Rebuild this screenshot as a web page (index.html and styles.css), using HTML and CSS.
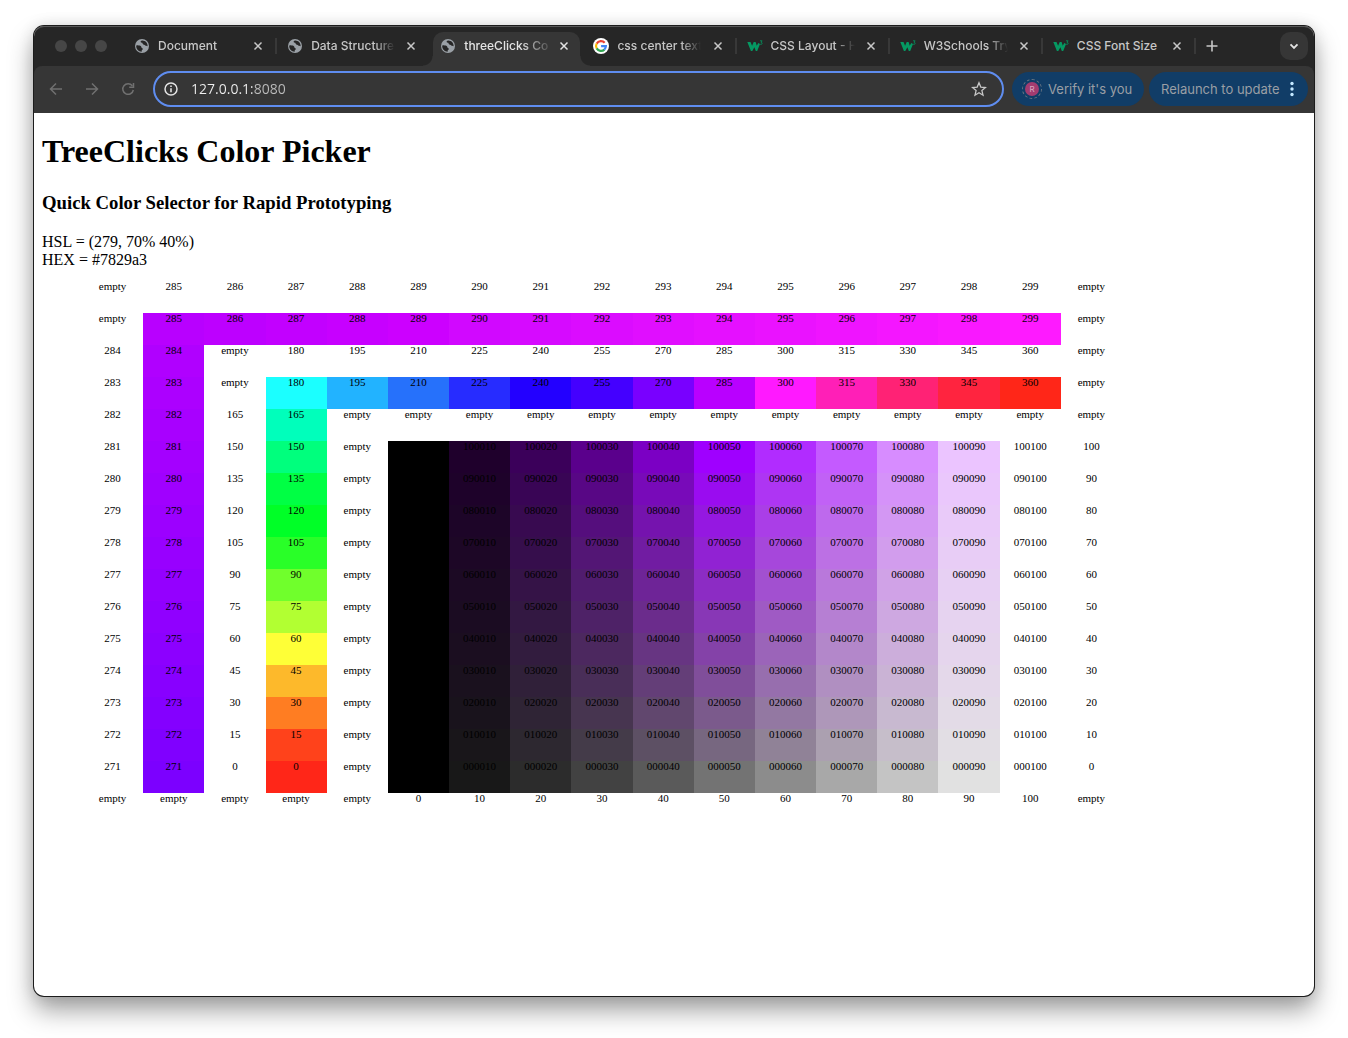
FILE: index.html
```html
<!DOCTYPE html>
<html lang="en">
<head>
<meta charset="utf-8">
<title>threeClicks Color Picker</title>
<link rel="stylesheet" href="styles.css">
</head>
<body>
<svg class="defs" aria-hidden="true">
  <symbol id="globe" viewBox="0 0 16 16">
    <circle cx="8" cy="8" r="7" fill="#9aa0a6"/>
    <path class="land" d="M2.6 7.2C4 7.3 5.600 7.300 6.700 7.900c.9.500.3 1.600 1.200 2 .8.300 1 .6.800 1.300-.2.700-.9.600-1 1.400v1.200C4.800 13.900 2.200 11.400 2.200 8.100ZM8.200 2.400c-1.400.4-1.900 1.200-1.400 1.900.5.600 1.600.2 1.700 1 .1.900.7 1.300 1.500 1.400 1 .1 1.200 1 2.100 1.100.7.100 1.200.2 1.500.5.300-3-1.900-5.800-5.400-5.900Z"/>
  </symbol>
  <symbol id="close" viewBox="0 0 16 16"><path d="M4.500 4.500l7 7M11.500 4.500l-7 7" fill="none" stroke="currentColor" stroke-width="1.500"/></symbol>
  <symbol id="w3" viewBox="0 0 16 16">
    <path d="M.3 4h3.200l1.600 3.800L6.700 4h1.900l1.200 3.800L11.200 5l1.800 1-2.800 7H8.800L7.400 9.300 5.300 13H3.900Z" fill="#059862"/>
    <path d="M13 2.800h2.100l-1 1.500c1.400.1 1.300 2.100 0 2.100-.6 0-.9-.2-1.200-.6" fill="none" stroke="#059862" stroke-width=".8"/>
  </symbol>
</svg>
<div class="window">
  <header>
    <div class="tabstrip">
      <div class="lights"><i></i><i></i><i></i></div>
      <nav class="tabs" aria-label="Tabs">
        <div class="tab"><svg class="icon"><use href="#globe"/></svg><span class="title">Document</span><button aria-label="Close Document"><svg class="icon"><use href="#close"/></svg></button></div>
        <div class="tab plain"><svg class="icon"><use href="#globe"/></svg><span class="title">Data Structure</span><button aria-label="Close Data Structure"><svg class="icon"><use href="#close"/></svg></button></div>
        <div class="tab active"><svg class="icon"><use href="#globe"/></svg><span class="title">threeClicks Co</span><button aria-label="Close threeClicks"><svg class="icon"><use href="#close"/></svg></button></div>
        <div class="tab"><svg class="icon" viewBox="0 0 16 16"><circle cx="8" cy="8" r="8" fill="#fff"/><g fill="none" stroke-width="2.200"><path d="M11.700 4.700A5 5 0 0 0 3.700 5.600" stroke="#ea4335"/><path d="M3.700 5.500a5 5 0 0 0 0 5" stroke="#fbbc05"/><path d="M3.700 10.400a5 5 0 0 0 7.700 1.200" stroke="#34a853"/><path d="M8.100 8.100h4.800a5 5 0 0 1-1.600 3.600" stroke="#4285f4"/></g></svg><span class="title">css center text</span><button aria-label="Close css center text"><svg class="icon"><use href="#close"/></svg></button></div>
        <div class="tab"><svg class="icon"><use href="#w3"/></svg><span class="title">CSS Layout - H</span><button aria-label="Close CSS Layout"><svg class="icon"><use href="#close"/></svg></button></div>
        <div class="tab"><svg class="icon"><use href="#w3"/></svg><span class="title">W3Schools Try</span><button aria-label="Close W3Schools"><svg class="icon"><use href="#close"/></svg></button></div>
        <div class="tab"><svg class="icon"><use href="#w3"/></svg><span class="title whole">CSS Font Size</span><button aria-label="Close CSS Font Size"><svg class="icon"><use href="#close"/></svg></button></div>
      </nav>
      <button class="new-tab" aria-label="New tab"><svg class="icon" viewBox="0 0 16 16"><path d="M8 2.500v11M2.500 8h11" stroke="currentColor" stroke-width="1.600"/></svg></button>
      <button class="tab-search" aria-label="Search tabs"><svg class="icon" viewBox="0 0 16 16"><path d="M4.500 6.300L8 9.800l3.500-3.500" fill="none" stroke="currentColor" stroke-width="1.900"/></svg></button>
    </div>
    <div class="toolbar">
      <button class="nav" aria-label="Back"><svg class="icon" viewBox="0 0 16 16"><path d="M14 8H3M8 2.500L2.500 8 8 13.500" fill="none" stroke="currentColor" stroke-width="1.500"/></svg></button>
      <button class="nav" aria-label="Forward"><svg class="icon" viewBox="0 0 16 16"><path d="M2 8h11M8 2.500L13.500 8 8 13.500" fill="none" stroke="currentColor" stroke-width="1.500"/></svg></button>
      <button class="nav" aria-label="Reload"><svg class="icon" viewBox="0 0 16 16"><path d="M12.300 4.800A5.300 5.300 0 1 0 13.300 9M13.500 2v4.300H9.200" fill="none" stroke="currentColor" stroke-width="1.500"/></svg></button>
      <div class="address">
        <svg class="icon" viewBox="0 0 16 16"><circle cx="8" cy="8" r="6" fill="none" stroke="currentColor" stroke-width="1.500"/><path d="M8 7.200v4M8 4.500v1.500" stroke="currentColor" stroke-width="1.600"/></svg>
        <input type="text" aria-label="Address" value="127.0.0.1:8080">
        <button aria-label="Bookmark this page"><svg class="icon" viewBox="0 0 16 16"><path d="M8 1.800l1.800 4.300 4.700.4-3.600 3.100 1.100 4.600L8 11.700l-4 2.500 1.100-4.600-3.600-3.100 4.700-.4Z" fill="none" stroke="currentColor" stroke-width="1.300"/></svg></button>
      </div>
      <button class="pill verify"><span class="avatar">R</span>Verify it's you</button>
      <button class="pill relaunch">Relaunch to update<svg class="dots" viewBox="0 0 4 16"><circle cx="2" cy="2.500" r="1.700"/><circle cx="2" cy="8" r="1.700"/><circle cx="2" cy="13.500" r="1.700"/></svg></button>
    </div>
  </header>
  <main>
    <h1>TreeClicks Color Picker</h1>
    <h3>Quick Color Selector for Rapid Prototyping</h3>
    <div>HSL = (279, 70% 40%)</div>
    <div>HEX = #7829a3</div>
    <table class="picker" aria-label="Color picker"><tbody id="cells"></tbody></table>
  </main>
</div>
<script src="picker.js"></script>
</body>
</html>
```
FILE: styles.css
```css
* { box-sizing: border-box; }
body { margin: 0; background: #fff; }
button { border: 0; padding: 0; margin: 0; background: none; color: inherit; font: inherit; display: flex; align-items: center; }
.defs { position: absolute; width: 0; height: 0; }
.icon { width: 16px; height: 16px; flex: none; display: block; }
.land { fill: #262626; }

.window {
  display: flex;
  flex-direction: column;
  min-height: calc(100vh - 68px);
  margin: 26px 34px 42px;
  border-radius: 10px;
  box-shadow: 0 0 0 1px #1c1c1c, 0 14px 26px rgba(0, 0, 0, .38), 0 0 16px rgba(0, 0, 0, .12);
  background: #fff;
}
header {
  border-radius: 10px 10px 0 0;
  overflow: hidden;
  background: #262626;
  box-shadow: inset 0 1px #585858;
  color: #c7c7c7;
  font: 500 12px/16px Inter, "Liberation Sans", sans-serif;
}
.tabstrip { display: flex; align-items: center; height: 40px; padding-right: 6px; }
.lights { display: flex; gap: 8px; padding: 0 17px 0 21px; }
.lights i { width: 12px; height: 12px; border-radius: 50%; background: #464646; }
.tabs { display: flex; flex: 0 1 1072px; min-width: 0; align-self: stretch; }
.tab { position: relative; display: flex; align-items: center; flex: 1 1 0; min-width: 0; gap: 8px; padding: 0 11px 0 10px; }
.title {
  flex: 1;
  min-width: 0;
  overflow: hidden;
  white-space: nowrap;
  mask-image: linear-gradient(to right, #000 64px, transparent 84px);
}
.title.whole { mask-image: none; }
.tab::after { content: ""; position: absolute; right: 0; top: 12px; width: 2px; height: 16px; background: #383838; }
.tab.plain::after { display: none; }
.active { z-index: 0; color: #e3e3e3; }
.active .land { fill: #363636; }
.active .title { mask-image: linear-gradient(to right, #000 56px, transparent 90px); }
.active::before {
  content: "";
  position: absolute;
  z-index: -1;
  inset: 6px 3px 0;
  border-radius: 10px 10px 0 0;
  background: #363636;
}
.tab.active::after {
  z-index: -1;
  inset: auto -7px 0;
  width: auto;
  height: 10px;
  background:
    radial-gradient(circle at 0 0, transparent 9px, #363636 10px) left / 10px 10px no-repeat,
    radial-gradient(circle at 100% 0, transparent 9px, #363636 10px) right / 10px 10px no-repeat;
}
.new-tab { margin-left: 8px; }
.tab-search { justify-content: center; width: 28px; height: 28px; margin-left: auto; border-radius: 10px; background: #363636; color: #e3e3e3; }

.toolbar { display: flex; align-items: center; height: 47px; padding: 0 6px 1px 14px; border-radius: 8px 8px 0 0; background: #363636; }
.nav { margin-right: 20px; color: #707070; }
.address {
  display: flex;
  align-items: center;
  flex: 1;
  min-width: 0;
  height: 36px;
  margin: 0 8px 0 -3px;
  padding: 0 15px 0 8px;
  border: 2px solid #5f8df0;
  border-radius: 18px;
}
.address > svg { color: #e3e3e3; }
input {
  flex: 1;
  min-width: 0;
  padding: 0;
  margin-left: 12px;
  border: 0;
  outline: 0;
  font: 500 14px/20px "Open Sans", "Liberation Sans", sans-serif;
  color: transparent;
  background: linear-gradient(to right, #f0f0f0 61px, #bdbdbd 61px);
  background-clip: text;
}
.pill { height: 34px; border-radius: 17px; background: #113d67; color: #9a9fa5; white-space: nowrap; font-size: 13px; font-weight: 400; }
.verify { width: 132px; padding-left: 10px; gap: 6px; margin-right: 5px; }
.relaunch { width: 159px; padding: 0 14px 0 12px; justify-content: space-between; }
.avatar { display: grid; place-items: center; width: 20px; height: 20px; border: 1px dashed #6b7783; border-radius: 50%; background: #a33c70 content-box; padding: 2px; font-size: 8px; line-height: 14px; color: #d9a9c0; }
.dots { width: 4px; height: 16px; fill: #c2e7ff; }

main { flex: 1; padding: 0 8px 16px; font: 16px/18px "Liberation Serif", serif; color: #000; }
h1 { margin: 20px 0 22px; font-size: 32px; line-height: 37px; }
h3 { margin: 0 0 20px; line-height: 21px; }
.picker { width: calc(100% - 224px); margin: 12px 0 0 40px; border-collapse: collapse; table-layout: fixed; }
.picker td { height: 32px; padding: 0; vertical-align: top; text-align: center; font-size: 11px; line-height: 11px; }
```
FILE: picker.js
```js
const HUE = 280;

// Coarse hue wheel in steps of 15 degrees, 0 to 360.
const WHEEL = ["#ff2618", "#ff421b", "#ff7d22", "#fdb92b", "#feff37", "#b2ff32", "#70ff2c", "#29ff28",
  "#00ff27", "#00ff44", "#00ff7d", "#00ffbb", "#1bffff", "#22b3ff", "#2671fb", "#272cff", "#2300ff",
  "#4400ff", "#7900ff", "#b900ff", "#ff19ff", "#ff1fb7", "#ff2275", "#ff243f", "#ff2618"];
const wheel = h => WHEEL[h / 15];

// Fine hues around the chosen one, 271 to 299.
const fine = h => {
  const r = h < 285 ? 124 + (h - 271) * 4 : 184 + (h - 285) * 5;
  const g = h < 290 ? 0 : 8 + (h - 290) * 2;
  return `rgb(${r}, ${g}, 255)`;
};

// Tone curve applied to every channel, sampled at tenths.
const TONE = [0, 24, 44, 66, 90, 115, 140, 168, 196, 225, 255];
const tone = v => {
  const i = Math.min(9, Math.floor(v * 10));
  return Math.round(TONE[i] + (TONE[i + 1] - TONE[i]) * (v * 10 - i));
};
const shade = (s, l) => {
  const L = l / 100;
  const a = (s / 100) * Math.min(L, 1 - L);
  const channel = n => {
    const k = (n + HUE / 30) % 12;
    return tone(L - a * Math.max(-1, Math.min(k - 3, 9 - k, 1)));
  };
  return `rgb(${channel(0)}, ${channel(8)}, ${channel(4)})`;
};

const grid = [];
const fineTop = Array.from({ length: 15 }, (_, i) => 285 + i);
const coarseTop = Array.from({ length: 13 }, (_, i) => 180 + i * 15);
const E = { text: "empty" };
const t = v => ({ text: v });

grid.push([E, ...fineTop.map(t), E]);
grid.push([E, ...fineTop.map(h => ({ text: h, color: fine(h) })), E]);
const side = h => [t(h), { text: h, color: fine(h) }];
grid.push([...side(284), E, ...coarseTop.map(t), E]);
grid.push([...side(283), E, ...coarseTop.map(h => ({ text: h, color: wheel(h) })), E]);
grid.push([...side(282), t(165), { text: 165, color: wheel(165) }, ...Array(13).fill(E)]);
for (let i = 0; i <= 10; i++) {
  const h = 150 - i * 15;
  const s = 100 - i * 10;
  const row = [...side(281 - i), t(h), { text: h, color: wheel(h) }, E];
  for (let l = 0; l <= 100; l += 10) {
    const code = String(s).padStart(3, "0") + String(l).padStart(3, "0");
    row.push({ text: code, color: shade(s, l) });
  }
  grid.push([...row, t(s)]);
}
grid.push([E, E, E, E, E, ...Array.from({ length: 11 }, (_, i) => t(i * 10)), E]);

const body = document.getElementById("cells");
for (const row of grid) {
  const tr = body.insertRow();
  for (const cell of row) {
    const td = tr.insertCell();
    td.textContent = cell.text;
    if (cell.color) td.style.backgroundColor = cell.color;
  }
}
```
